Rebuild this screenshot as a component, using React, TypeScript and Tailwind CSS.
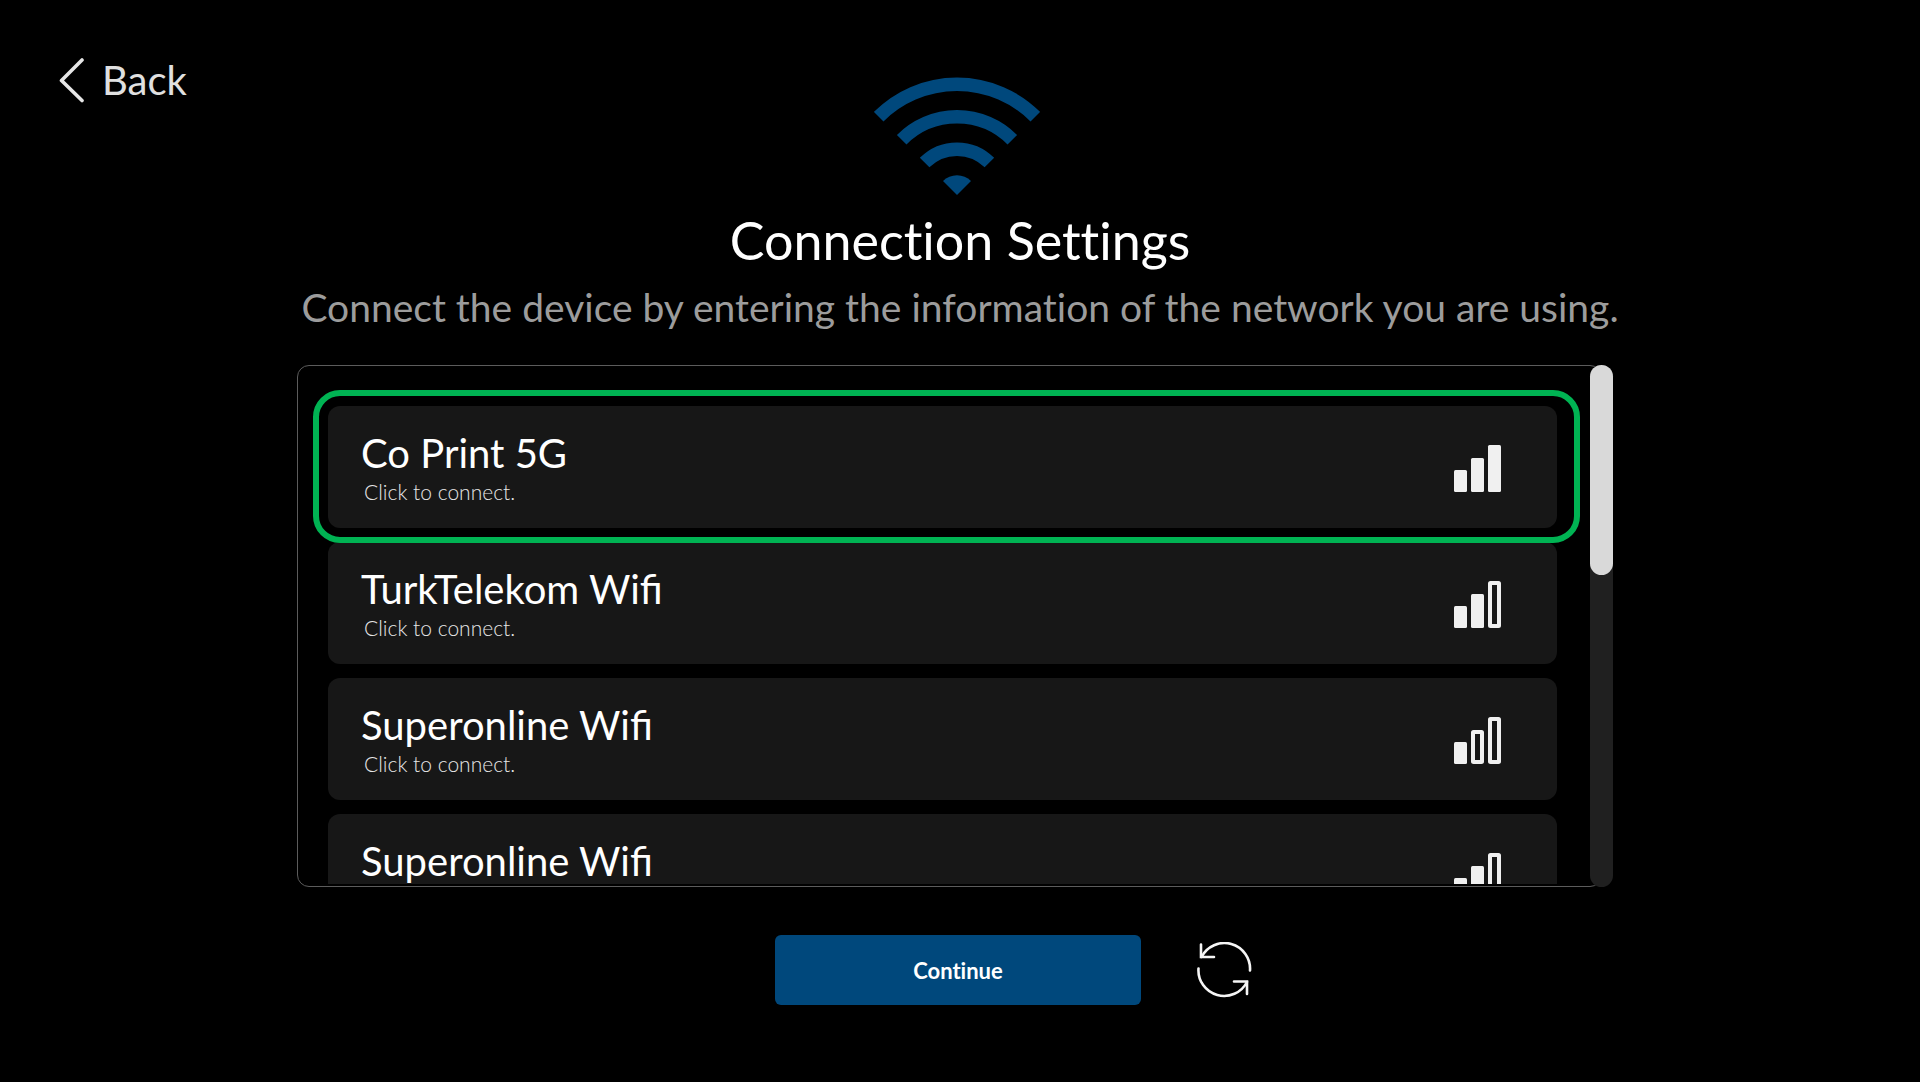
type Bars = 1 | 2 | 3;

const networks: { id: number; name: string; bars: Bars; selected?: boolean }[] = [
  { id: 1, name: "Co Print 5G", bars: 3, selected: true },
  { id: 2, name: "TurkTelekom Wifi", bars: 2 },
  { id: 3, name: "Superonline Wifi", bars: 1 },
  { id: 4, name: "Superonline Wifi", bars: 2 },
];

const columns = [
  { x: 0, y: 25, height: 22 },
  { x: 17, y: 13, height: 34 },
  { x: 34, y: 0, height: 47 },
];

function SignalIcon({ bars }: { bars: Bars }) {
  return (
    <svg width="47" height="47" viewBox="0 0 47 47" aria-hidden="true" className="shrink-0">
      {columns.map((c, i) =>
        i < bars ? (
          <rect key={i} x={c.x} y={c.y} width="13" height={c.height} rx="1.5" fill="#f0f0f0" />
        ) : (
          <rect
            key={i}
            x={c.x + 2}
            y={c.y + 2}
            width="9"
            height={c.height - 4}
            rx="0.5"
            fill="none"
            stroke="#f0f0f0"
            strokeWidth="4"
          />
        ),
      )}
    </svg>
  );
}

function WifiIcon() {
  return (
    <svg width="166" height="118" viewBox="0 0 166 118" aria-hidden="true">
      <g fill="none" stroke="#00487c" strokeWidth="13.5">
        <path d="M4.7 39.7A110.7 110.7 0 0 1 161.3 39.7" />
        <path d="M27.7 62.7A78.2 78.2 0 0 1 138.3 62.7" />
        <path d="M50.6 85.6A45.8 45.8 0 0 1 115.4 85.6" />
      </g>
      <path d="M83 118 69 104A19.8 19.8 0 0 1 97 104Z" fill="#00487c" />
    </svg>
  );
}

function RefreshIcon() {
  return (
    <svg
      width="56"
      height="56"
      viewBox="0 0 56 56"
      fill="none"
      stroke="#f5f5f5"
      strokeWidth="2.6"
      strokeLinecap="round"
      strokeLinejoin="miter"
      aria-hidden="true"
    >
      <path d="M53 28.500A25.700 25.700 0 0 0 4.500 15" />
      <path d="M4 2.500V15H17" />
      <path d="M1.500 26.500A25.700 25.700 0 0 0 50 40" />
      <path d="M50 52V39.500H37" />
    </svg>
  );
}

export default function App() {
  return (
    <div className="flex min-h-screen flex-col bg-black font-['Lato',sans-serif] text-white">
      <header className="flex h-[77px] items-end px-[58px]">
        <button type="button" className="-mb-7 flex h-[50px] items-center gap-4 text-[40px] leading-[50px] text-[#e0e0e0]">
          <svg width="28" height="46" viewBox="0 0 28 46" fill="none" stroke="#e6e6e6" strokeWidth="3.6" strokeLinecap="round" strokeLinejoin="round" aria-hidden="true">
            <path d="M24 3 3.500 23.500 24 43.500" />
          </svg>
          Back
        </button>
      </header>

      <main className="mx-auto flex w-full max-w-[1336px] flex-col">
        <div className="flex justify-center pr-[6px]">
          <WifiIcon />
        </div>
        <h1 className="mt-[15px] text-center text-[52px] leading-[60px] [font-variant-ligatures:none]">Connection Settings</h1>
        <p className="mt-3 text-center text-[39px] leading-[50px] text-[#9c9c9c] [font-variant-ligatures:none]">
          Connect the device by entering the information of the network you are using.
        </p>

        <section aria-label="Available networks" className="mt-[33px] flex h-[522px] pl-[5px] pr-[15px]">
          <div className="-mr-3 min-w-0 flex-1 overflow-hidden rounded-xl border border-[#5c5c5c] pb-[2px]">
            <div className="h-full overflow-hidden">
              <ul className="flex flex-col gap-[14px] pl-[30px] pr-11 pt-10">
                {networks.map((n) => (
                  <li key={n.id} className="relative">
                    <button
                      type="button"
                      aria-pressed={!!n.selected}
                      className="flex h-[122px] w-full items-center justify-between rounded-xl bg-[#171717] pl-[33px] pr-14 pt-[2px] text-left"
                    >
                      <span className="flex flex-col">
                        <span className="text-[40px] leading-[48px]">{n.name}</span>
                        <span className="pl-[3px] text-[21px] font-light leading-[30px] text-[#e6e6e6]">Click to connect.</span>
                      </span>
                      <SignalIcon bars={n.bars} />
                    </button>
                    {n.selected && (
                      <span className="pointer-events-none absolute -bottom-[15px] -left-[15px] -right-[23px] -top-4 z-10 rounded-[27px] border-[6px] border-[#00b353]" />
                    )}
                  </li>
                ))}
              </ul>
            </div>
          </div>
          <div className="relative w-[23px] rounded-full bg-[#202020]">
            <div className="h-[210px] rounded-full bg-[#d9d9d9]" />
          </div>
        </section>

        <div className="mt-12 grid grid-cols-[1fr_366px_1fr] items-center pr-1">
          <button
            type="button"
            className="col-start-2 h-[70px] rounded-md bg-[#00487c] text-[22px] font-bold [font-variant-ligatures:none]"
          >
            Continue
          </button>
          <button type="button" aria-label="Refresh networks" className="ml-14 justify-self-start">
            <RefreshIcon />
          </button>
        </div>
      </main>
    </div>
  );
}
